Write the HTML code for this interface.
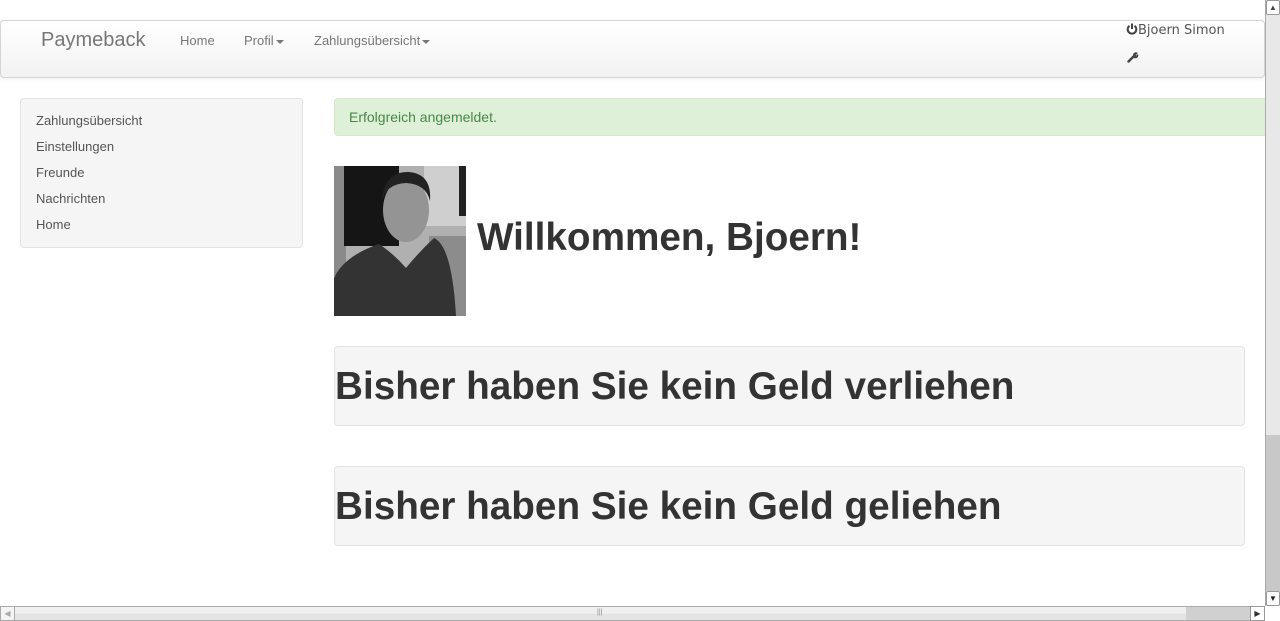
<!DOCTYPE html>
<html><head><meta charset="utf-8"><style>
*{box-sizing:border-box;margin:0;padding:0}
html,body{width:1280px;height:621px;overflow:hidden;background:#fff;font-family:"Liberation Sans",sans-serif;color:#333}
.abs{position:absolute}
.nav{left:0;top:20px;width:1265px;height:58px;border:1px solid #d4d4d4;border-radius:4px;background:linear-gradient(#fff,#f2f2f2);box-shadow:0 1px 4px rgba(0,0,0,.065)}
.brand{left:41px;top:29px;font-size:20px;color:#777}
.nl{top:33px;font-size:13px;color:#777}
.caret{display:inline-block;width:0;height:0;border-left:4px solid transparent;border-right:4px solid transparent;border-top:4px solid #777;vertical-align:middle;margin-left:2px}
.side{left:20px;top:98px;width:283px;height:150px;background:#f5f5f5;border:1px solid #e3e3e3;border-radius:4px}
.side div{position:absolute;left:15px;font-size:13px;color:#555}
.alert{left:334px;top:98px;width:940px;height:38px;background:#dff0d8;border:1px solid #d6e9c6;border-radius:4px 0 0 4px;color:#468847;font-size:14px;padding:10px 14px}
.well{left:334px;width:911px;height:80px;background:#f5f5f5;border:1px solid #e3e3e3;border-radius:4px}
.well h1{font-size:38.7px;font-weight:bold;color:#333;position:absolute;left:0;top:18px;white-space:nowrap}
</style></head><body>
<div class="abs nav"></div>
<div class="abs brand">Paymeback</div>
<div class="abs nl" style="left:180px">Home</div>
<div class="abs nl" style="left:244px">Profil<span class="caret"></span></div>
<div class="abs nl" style="left:314px">Zahlungsübersicht<span class="caret"></span></div>
<div class="abs" style="left:1126px;top:23px;font-family:'DejaVu Sans',sans-serif;font-size:13px;color:#555">
<svg width="12" height="12" viewBox="0 0 12 12" style="vertical-align:-1px"><path d="M3.5 2.8A4.3 4.3 0 1 0 8.5 2.8" fill="none" stroke="#444" stroke-width="2"/><path d="M6 0.5V6" stroke="#444" stroke-width="2"/></svg>Bjoern Simon</div>
<svg class="abs" style="left:1127px;top:51px" width="12" height="12" viewBox="0 0 12 12"><path d="M1.5 10.5L6.5 5.5" stroke="#444" stroke-width="2.4" stroke-linecap="round"/><path d="M6 3.5A3 3 0 0 1 10.8 2L8.8 4.2 9.5 4.5 11 3A3 3 0 0 1 7 7Z" fill="#444"/></svg>
<div class="abs side">
<div style="top:14px">Zahlungsübersicht</div>
<div style="top:40px">Einstellungen</div>
<div style="top:66px">Freunde</div>
<div style="top:92px">Nachrichten</div>
<div style="top:118px">Home</div>
</div>
<div class="abs alert">Erfolgreich angemeldet.</div>
<svg class="abs" style="left:334px;top:166px" width="132" height="150" viewBox="0 0 132 150">
<rect width="132" height="150" fill="#b0b0b0"/>
<rect x="0" y="0" width="12" height="110" fill="#8a8a8a"/>
<rect x="10" y="0" width="55" height="80" fill="#151515"/>
<rect x="90" y="0" width="42" height="60" fill="#cfcfcf"/>
<rect x="125" y="0" width="7" height="50" fill="#222"/>
<rect x="95" y="70" width="37" height="80" fill="#8c8c8c"/>
<ellipse cx="72" cy="44" rx="23" ry="32" fill="#949494"/>
<path d="M48 35Q50 5 75 6Q98 8 96 35Q92 18 72 17Q52 18 48 35Z" fill="#222"/>
<path d="M0 150V112Q10 90 45 78Q60 88 72 102Q85 86 100 72Q118 80 122 150Z" fill="#333"/>
</svg>
<div class="abs" style="left:477px;top:216px;font-size:38.7px;font-weight:bold">Willkommen, Bjoern!</div>
<div class="abs well" style="top:346px"><h1>Bisher haben Sie kein Geld verliehen</h1></div>
<div class="abs well" style="top:466px"><h1>Bisher haben Sie kein Geld geliehen</h1></div>
<div class="abs" style="left:1265px;top:0;width:15px;height:606px;background:#e8e8e8;border-left:1px solid #aaa"></div>
<div class="abs" style="left:1266px;top:435px;width:14px;height:156px;background:#c8c8c8"></div>
<div class="abs" style="left:1266px;top:0;width:14px;height:15px;background:#fff;border:1px solid #999;border-radius:2px;font-size:8px;text-align:center;line-height:13px;color:#444">▲</div>
<div class="abs" style="left:1266px;top:591px;width:14px;height:15px;background:#fff;border:1px solid #999;border-radius:2px;font-size:8px;text-align:center;line-height:13px;color:#222">▼</div>
<div class="abs" style="left:0;top:606px;width:1265px;height:15px;background:linear-gradient(#f0f0f0 50%,#e4e4e4 50%);border:1px solid #aaa;border-radius:2px"></div>
<div class="abs" style="left:1186px;top:607px;width:64px;height:13px;background:#d0d0d0"></div>
<div class="abs" style="left:597px;top:609px;font-size:7px;color:#888">|||</div>
<div class="abs" style="left:1250px;top:606px;width:15px;height:15px;background:#fff;border:1px solid #999;font-size:8px;text-align:center;line-height:13px">▶</div>
<div class="abs" style="left:0;top:606px;width:15px;height:15px;background:#f4f4f4;border:1px solid #aaa;font-size:8px;text-align:center;line-height:13px;color:#aaa">◀</div>
<div class="abs" style="left:1265px;top:606px;width:15px;height:15px;background:#fff"></div>
</body></html>
